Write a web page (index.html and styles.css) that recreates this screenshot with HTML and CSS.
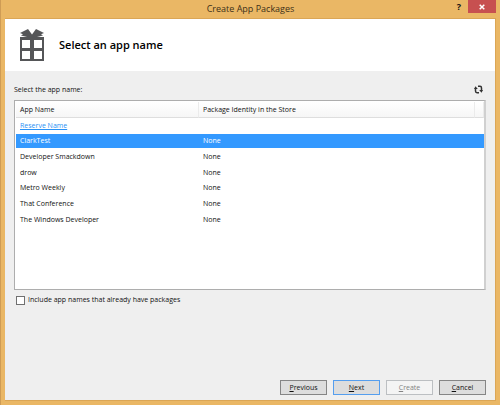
FILE: index.html
```html
<!DOCTYPE html>
<html lang="en">
<head>
<meta charset="utf-8">
<title>Create App Packages</title>
<link rel="stylesheet" href="styles.css">
</head>
<body>
<main class="window">
  <header class="titlebar">
    <h1 class="title">Create App Packages</h1>
    <div class="window-controls">
      <button class="help" type="button" aria-label="Help">?</button>
      <button class="close" type="button" aria-label="Close">
        <svg width="6" height="6" viewBox="0 0 6 6"><path d="M.7 .7 5.3 5.3M5.3 .7.7 5.3" stroke="#fff" stroke-width="1.5"/></svg>
      </button>
    </div>
  </header>
  <section class="client">
    <div class="banner">
      <svg class="gift" width="26" height="34" viewBox="0 0 26 34">
        <path fill="#555658" fill-rule="evenodd" d="M1 9H25V33H1ZM3 12V20H11V12ZM15 12V20H23V12ZM3 23V31H11V23ZM15 23V31H23V23Z"/>
        <path fill="#555658" d="M1 5 9 1 13 6.500 17 1 25 5 22 6.300 24 7.500 16 9.500H10L2 7.500 4 6.300Z"/>
      </svg>
      <h2 class="heading">Select an app name</h2>
    </div>
    <div class="content">
      <div class="list-bar">
        <span id="list-label">Select the app name:</span>
        <button class="refresh" type="button" aria-label="Refresh">
          <svg width="9" height="9" viewBox="0 0 9 9"><g fill="none" stroke="#333" stroke-width="1.5"><path d="M5 7.700H3Q1.500 7.700 1.500 6V3"/><path d="M4 1.300H6Q7.500 1.300 7.500 3V6"/></g><path fill="#333" d="M0 4 1.500 1.300 3.800 4ZM9 5 7.500 7.700 5.200 5Z"/></svg>
        </button>
      </div>
      <div class="list">
        <table aria-labelledby="list-label">
          <colgroup><col class="name-col"><col><col class="end-col"></colgroup>
          <thead><tr><th>App Name</th><th>Package Identity in the Store</th><th></th></tr></thead>
          <tbody>
            <tr><td><a href="#">Reserve Name</a></td><td></td><td></td></tr>
            <tr class="selected"><td>ClarkTest</td><td>None</td><td></td></tr>
            <tr><td>Developer Smackdown</td><td>None</td><td></td></tr>
            <tr><td>drow</td><td>None</td><td></td></tr>
            <tr><td>Metro Weekly</td><td>None</td><td></td></tr>
            <tr><td>That Conference</td><td>None</td><td></td></tr>
            <tr><td>The Windows Developer</td><td>None</td><td></td></tr>
          </tbody>
        </table>
      </div>
      <label class="include"><input type="checkbox">Include app names that already have packages</label>
      <footer class="actions">
        <button type="button"><u>P</u>revious</button>
        <button class="default" type="button"><u>N</u>ext</button>
        <button type="button" disabled><u>C</u>reate</button>
        <button type="button"><u>C</u>ancel</button>
      </footer>
    </div>
  </section>
</main>
</body>
</html>
```
FILE: styles.css
```css
* { box-sizing: border-box; }

body {
  margin: 0;
  font: 7px/10px "Open Sans", "Noto Sans", sans-serif;
  color: #111;
}

button {
  font: inherit;
  color: inherit;
  padding: 0;
}

.window {
  display: flex;
  flex-direction: column;
  min-height: 100vh;
  padding: 0 4px 4px 4px;
  border-left: 1px solid #cf9c55;
  background: #eab765;
}

.titlebar {
  display: grid;
  grid-template-columns: 1fr auto 1fr;
  height: 18px;
}

.title {
  grid-column: 2;
  margin: 0;
  font-size: 9px;
  font-weight: 400;
  line-height: 18px;
  color: #3d3018;
}

.window-controls {
  display: flex;
  justify-content: flex-end;
  align-items: flex-start;
}

.help {
  width: 18px;
  height: 13px;
  border: 0;
  background: none;
  font-size: 9px;
  font-weight: 700;
}

.close {
  display: flex;
  align-items: center;
  justify-content: center;
  width: 28px;
  height: 13px;
  border: 0;
  background: #c75050;
}

.client {
  display: flex;
  flex: 1;
  flex-direction: column;
  border: 1px solid #dba656;
  border-left: 0;
  background: #efefef;
}

.banner {
  display: flex;
  align-items: center;
  gap: 14px;
  height: 52px;
  padding-left: 14px;
  background: #fff;
}

.heading {
  margin: 0;
  font-size: 11px;
  font-weight: 600;
  line-height: 16px;
  color: #000;
}

.content {
  display: flex;
  flex: 1;
  flex-direction: column;
  padding: 12px 9px 5px 9px;
}

.list-bar {
  display: flex;
  align-items: center;
  justify-content: space-between;
  height: 17px;
  padding-bottom: 4px;
}

.refresh {
  display: flex;
  margin-right: 3px;
  border: 0;
  background: none;
}

.list {
  height: 190px;
  padding: 1px 0 0 1px;
  border: 1px solid #adadad;
  border-right: 2px solid #d0d0d0;
  background: #fff;
}

table {
  width: 100%;
  table-layout: fixed;
  border-collapse: separate;
  border-spacing: 0;
}

.name-col { width: 183px; }
.end-col { width: 9px; }

th, td {
  height: 16px;
  padding: 0 4px;
  text-align: left;
  font-weight: 400;
}

th {
  border-right: 1px solid #ebebeb;
  border-bottom: 1px solid #dedede;
  background: linear-gradient(#fff, #f6f6f6);
}

td {
  border: solid transparent;
  border-width: 1px 0;
  background-clip: padding-box;
}

tr:nth-child(3n + 1) td { height: 15px; }

a { color: #2a92f5; }

.selected td {
  background-color: #3399ff;
  color: #fff;
}

.include {
  display: flex;
  align-items: center;
  gap: 3px;
  margin: 5px 2px;
}

.include input {
  appearance: none;
  width: 9px;
  height: 9px;
  margin: 0;
  border: 1px solid #707070;
  background: #fff;
}

.actions {
  display: flex;
  justify-content: flex-end;
  gap: 6px;
  margin-top: auto;
}

.actions button {
  width: 47px;
  height: 15px;
  border: 1px solid #858585;
  background: #dddddd;
}

.actions .default { border-color: #559eee; }

.actions button:disabled {
  border-color: #bcbfc2;
  background: #f4f4f4;
  color: #838383;
}
```
